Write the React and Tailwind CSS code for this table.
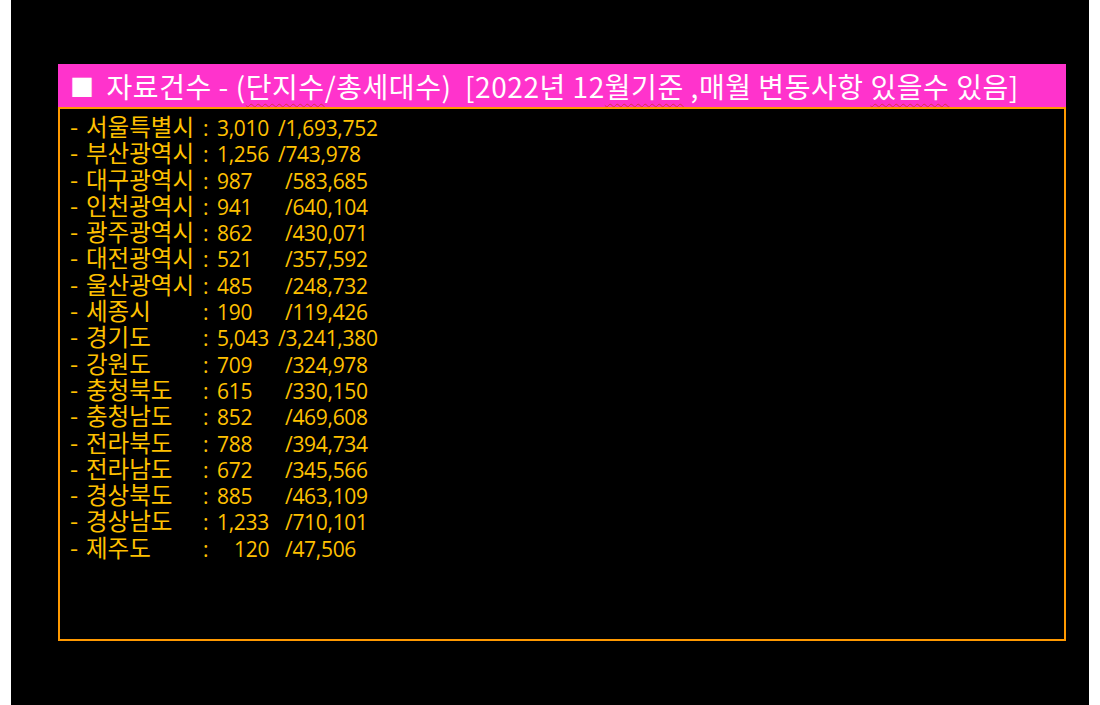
import React from "react";

const rows = [
  { name: "서울특별시", num: "3,010", total: "/1,693,752", wide: true },
  { name: "부산광역시", num: "1,256", total: "/743,978", wide: true },
  { name: "대구광역시", num: "987", total: "/583,685" },
  { name: "인천광역시", num: "941", total: "/640,104" },
  { name: "광주광역시", num: "862", total: "/430,071" },
  { name: "대전광역시", num: "521", total: "/357,592" },
  { name: "울산광역시", num: "485", total: "/248,732" },
  { name: "세종시", num: "190", total: "/119,426" },
  { name: "경기도", num: "5,043", total: "/3,241,380", wide: true },
  { name: "강원도", num: "709", total: "/324,978" },
  { name: "충청북도", num: "615", total: "/330,150" },
  { name: "충청남도", num: "852", total: "/469,608" },
  { name: "전라북도", num: "788", total: "/394,734" },
  { name: "전라남도", num: "672", total: "/345,566" },
  { name: "경상북도", num: "885", total: "/463,109" },
  { name: "경상남도", num: "1,233", total: "/710,101" },
  { name: "제주도", num: "120", total: "/47,506", indent: true },
];

const squiggle =
  "underline decoration-wavy decoration-[#e0304a] decoration-1 underline-offset-[5px]";
const latin = { fontFamily: '"Open Sans", "Noto Sans CJK KR", sans-serif' };

export default function App() {
  return (
    <div className="w-[1100px] h-[705px] bg-white flex">
      <div
        className="ml-[11px] w-[1078px] h-full bg-black pt-[64px] pl-[47px]"
        style={{ fontFamily: '"Noto Sans CJK KR", "Noto Sans", sans-serif' }}
      >
        <div className="w-[1008px]">
          <div className="h-[43px] bg-[#ff33cc] flex items-center pl-[12px] text-white text-[28px] tracking-[0.55px] leading-none whitespace-pre">
            <span className="text-[24px] mr-[12px]">■</span>
            <span>
              자료건수 - (<span className={squiggle}>단지수</span>/총세대수)  [2022년 12
              <span className={squiggle}>월기준</span> ,매월 변동사항{" "}
              <span className={squiggle}>있을수</span> 있음]
            </span>
          </div>
          <div className="h-[534px] border-2 border-[#ff9900] pt-[4px] pl-[10px] text-[#ffc000] text-[23.5px] leading-[26.3px]">
            {rows.map((r) => (
              <div
                key={r.name}
                className="h-[26.3px] flex items-baseline whitespace-pre"
              >
                <span className="w-[16px]">-</span>
                <span className="w-[117px]">{r.name}</span>
                <span
                  className="w-[14px] text-[21px] leading-[26.3px]"
                  style={latin}
                >
                  :
                </span>
                <span
                  className={
                    (r.wide ? "w-[61px] " : "w-[68px] ") +
                    (r.indent ? "pl-[17px] " : "") +
                    "text-[21px] leading-[26.3px] tracking-[-0.3px]"
                  }
                  style={latin}
                >
                  {r.num}
                </span>
                <span
                  className="text-[21px] leading-[26.3px] tracking-[-0.3px]"
                  style={latin}
                >
                  {r.total}
                </span>
              </div>
            ))}
          </div>
        </div>
      </div>
    </div>
  );
}
